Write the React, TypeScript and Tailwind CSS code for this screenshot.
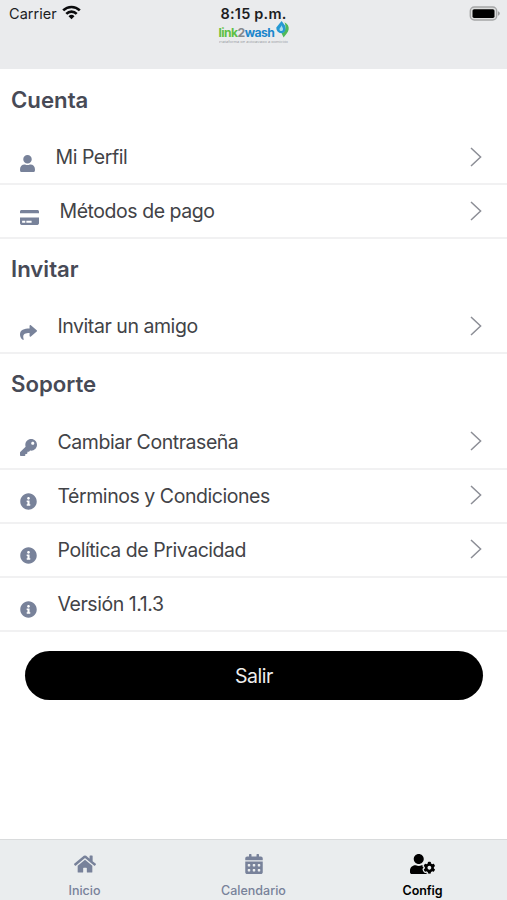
import type { FC, ReactNode } from 'react';
import React from 'react';
import type { IconType } from 'react-icons';
import {
  FaCalendarAlt,
  FaCreditCard,
  FaHome,
  FaInfoCircle,
  FaKey,
  FaShare,
  FaUser,
  FaUserCog,
} from 'react-icons/fa';

interface RowProps {
  icon: IconType;
  label: string;
  iconClass?: string;
  arrow?: boolean;
}

interface TabProps {
  icon: IconType;
  label: string;
  iconClass: string;
  labelClass: string;
  active?: boolean;
}

const StatusBar: FC = () => (
  <div className="grid h-[27px] grid-cols-3 items-center text-[#1c1d1f]">
    <div className="flex items-center gap-[5px] pl-[9px]">
      <span className="text-[14.5px] tracking-[0.05px]">Carrier</span>
      <svg className="-mt-[2px]" width="19" height="15" viewBox="0 0 19 15" fill="none" stroke="#0b0b0d" strokeWidth="2.6">
        <path d="M1.2 5.4a11.8 11.8 0 0 1 16.6 0" />
        <path d="M4.3 8.8a7.4 7.4 0 0 1 10.4 0" />
        <path d="M9.5 14.2 6.5 11.2a4.3 4.3 0 0 1 6 0Z" fill="#0b0b0d" stroke="none" />
      </svg>
    </div>
    <span className="text-center text-[14.5px] leading-[18px] font-semibold tracking-[0.2px] whitespace-nowrap">
      8:15 p.m.
    </span>
    <svg className="mr-[6px] justify-self-end" width="32" height="16" viewBox="0 0 32 16">
      <rect x="1.3" y="1" width="26.4" height="13" rx="4" fill="#dcdddd" stroke="#a5a6a7" strokeWidth="1.4" />
      <rect x="3.5" y="3.2" width="22" height="8.7" rx="1.6" fill="#000" />
      <path d="M29 5.3c2.4.8 2.4 3.6 0 4.400Z" fill="#9b9c9d" />
    </svg>
  </div>
);

const Logo: FC = () => (
  <div className="mx-auto -mt-[6px] w-[70px]">
    <div className="flex h-[18px] items-start">
      <div className="flex w-[57px] pt-[6px] text-[12.2px] leading-[12px] font-bold tracking-[-0.55px]">
        <span className="text-[#5fc043]">link</span>
        <span className="text-[#85898d]">2</span>
        <span className="text-[#1c87cc]">wash</span>
      </div>
      <svg className="shrink-0" width="13" height="17" viewBox="0 0 13 17">
        <path d="M8.5 1.200C11.800 3 13 5.300 12.700 8.200 12.300 11.600 9.500 13.300 7.600 16.600L5.600 12.300C9.500 11.200 10.400 6 8.500 1.200Z" fill="#4fb95a" />
        <path d="M5.600 0 8.800 4.300C10.600 8.200 8.600 12.400 5.400 12.300 2 12.100.3 9.600.3 6.600Z" fill="#2699d3" />
        <path d="M5.700 4.200C5.900 6.200 7.600 7 6.900 8.900 6.200 10.600 3.700 10.300 3.500 8.500 3.300 6.900 5.300 6.100 5.700 4.200Z" fill="#a9def0" />
      </svg>
    </div>
    <svg width="70" height="5" viewBox="0 0 70 5" fontFamily="Inter, sans-serif">
      <text x="0" y="3.8" fontSize="2" fill="#a0a4a9" textLength="69" lengthAdjust="spacingAndGlyphs">
        Plataforma de autolavado a domicilio
      </text>
    </svg>
  </div>
);

const Section: FC<{ title: string; children: ReactNode }> = ({ title, children }) => (
  <section>
    <h2 className="flex h-[61px] items-center pb-[2px] pl-[11px] text-[22.2px] font-semibold text-[#474a56]">{title}</h2>
    {children}
  </section>
);

const Row: FC<RowProps> = ({ icon: Icon, label, iconClass = 'w-[17px]', arrow = true }) => (
  <div className="flex h-[54.15px] items-center border-b-2 border-[#f1f1f2] pl-[20px] pr-[25px]">
    <Icon className={`mt-[12px] h-[17px] shrink-0 text-[#78829a] ${iconClass}`} />
    <span className="flex-1 pt-[1.5px] pl-[20.5px] text-[19.5px] tracking-[-0.45px] text-[#424347]">{label}</span>
    {arrow && (
      <svg className="mb-px" width="12" height="20" viewBox="0 0 12 20" fill="none" stroke="#8c8e96" strokeWidth="1.5">
        <path d="M1 1l9.600 9L1 19" />
      </svg>
    )}
  </div>
);

const Tab: FC<TabProps> = ({ icon: Icon, label, iconClass, labelClass, active }) => (
  <div className={`flex flex-col items-center pt-[12px] ${active ? 'text-black' : 'text-[#78829a]'}`}>
    <div className="flex h-[23px] items-center">
      <Icon className={iconClass} />
    </div>
    <span className={`mt-[7px] text-[12.5px] leading-[18px] ${labelClass}`}>{label}</span>
  </div>
);

const App: FC = () => (
  <div className="flex h-[900px] w-[507px] flex-col overflow-hidden bg-white font-['Inter',sans-serif]">
    <header className="h-[69px] shrink-0 bg-[#eaebed]">
      <StatusBar />
      <Logo />
    </header>
    <main className="flex-1 pt-px">
      <Section title="Cuenta">
        <Row icon={FaUser} label="Mi Perfil" iconClass="w-[15px]" />
        <Row icon={FaCreditCard} label="Métodos de pago" iconClass="w-[19px]" />
      </Section>
      <Section title="Invitar">
        <Row icon={FaShare} label="Invitar un amigo" />
      </Section>
      <Section title="Soporte">
        <Row icon={FaKey} label="Cambiar Contraseña" />
        <Row icon={FaInfoCircle} label="Términos y Condiciones" />
        <Row icon={FaInfoCircle} label="Política de Privacidad" />
        <Row icon={FaInfoCircle} label="Versión 1.1.3" arrow={false} />
      </Section>
      <button className="mx-[25px] mt-[19px] h-[49px] w-[458px] rounded-full bg-black pt-[2px] text-[19.5px] tracking-[-0.45px] text-[#ededed]">
        Salir
      </button>
    </main>
    <nav className="grid h-[61px] shrink-0 grid-cols-3 border-t border-[#d9dbdc] bg-[#eaedee]">
      <Tab icon={FaHome} label="Inicio" iconClass="h-[20px] w-[22px]" labelClass="font-medium" />
      <Tab icon={FaCalendarAlt} label="Calendario" iconClass="h-[20px] w-[18px]" labelClass="font-medium" />
      <Tab icon={FaUserCog} label="Config" iconClass="h-[20px] w-[25px]" labelClass="font-semibold tracking-[-0.1px]" active />
    </nav>
  </div>
);

export default App;
